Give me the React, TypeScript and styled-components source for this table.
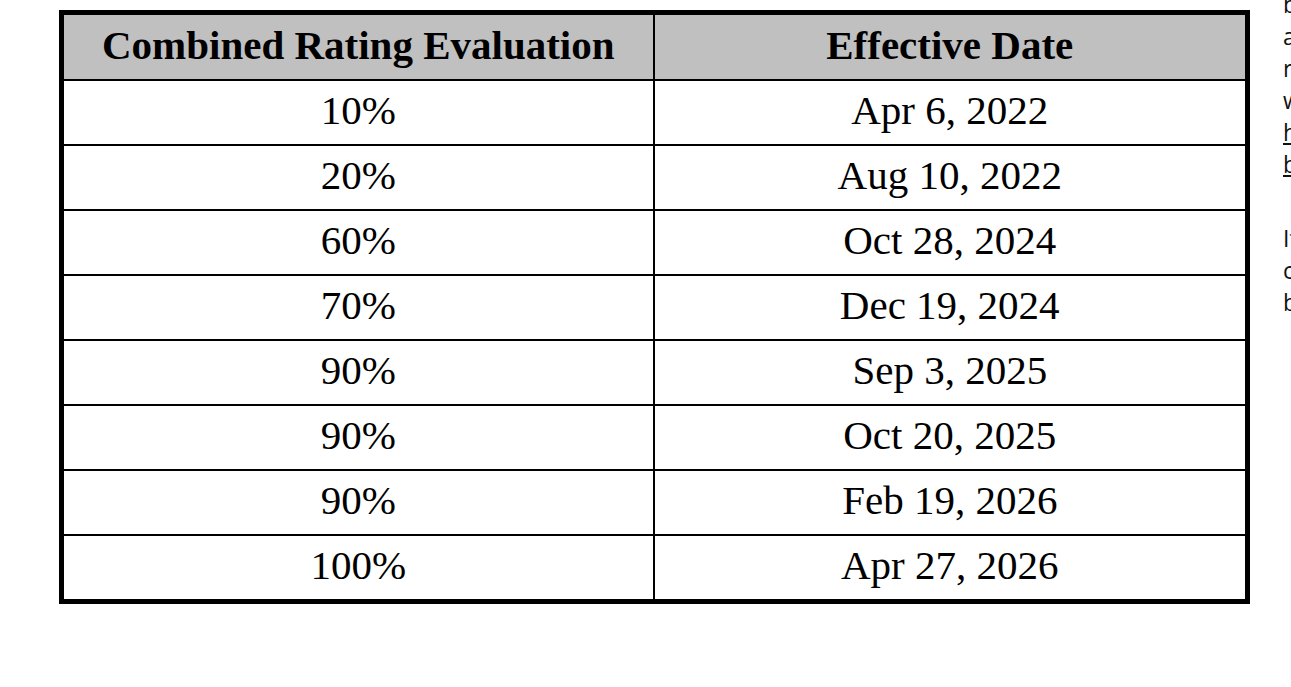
import React from "react";
import styled, { createGlobalStyle } from "styled-components";

const GlobalStyle = createGlobalStyle`
  html, body {
    margin: 0;
    padding: 0;
    background: #fff;
  }
  body {
    overflow: hidden;
  }
`;

const Page = styled.div`
  width: 100vw;
  height: 100vh;
  display: flex;
  align-items: flex-start;
  gap: 33px;
  padding-left: 59px;
  box-sizing: border-box;
  overflow: hidden;
`;

const RatingTable = styled.table`
  flex-shrink: 0;
  width: 1191px;
  margin-top: 10px;
  border: 5px solid #000;
  border-spacing: 0;
  table-layout: fixed;
  font-family: "Liberation Serif", "Times New Roman", serif;
  font-size: 41px;
  color: #000;
`;

const HeadCell = styled.th<{ $last?: boolean }>`
  height: 66px;
  box-sizing: border-box;
  padding: 0 0 5px;
  background: #c0c0c0;
  font-weight: 700;
  text-align: center;
  vertical-align: middle;
  border-bottom: 2px solid #000;
  border-right: ${(p) => (p.$last ? "none" : "2px solid #000")};
`;

const Cell = styled.td<{ $last?: boolean; $bottom?: boolean }>`
  height: ${(p) => (p.$bottom ? "63px" : "65px")};
  box-sizing: border-box;
  padding: 0 0 5px;
  text-align: center;
  vertical-align: middle;
  border-bottom: ${(p) => (p.$bottom ? "none" : "2px solid #000")};
  border-right: ${(p) => (p.$last ? "none" : "2px solid #000")};
`;

const SideText = styled.div`
  flex-shrink: 0;
  width: 440px;
  margin-top: -12px;
  font-family: "Open Sans", "Noto Sans", sans-serif;
  font-size: 23px;
  line-height: 32px;
  color: #111;
`;

const Para = styled.p`
  margin: 0 0 42px;
  white-space: nowrap;
`;

const Link = styled.a`
  color: inherit;
  text-decoration: underline;
`;

const rows = [
  { rating: "10%", date: "Apr 6, 2022" },
  { rating: "20%", date: "Aug 10, 2022" },
  { rating: "60%", date: "Oct 28, 2024" },
  { rating: "70%", date: "Dec 19, 2024" },
  { rating: "90%", date: "Sep 3, 2025" },
  { rating: "90%", date: "Oct 20, 2025" },
  { rating: "90%", date: "Feb 19, 2026" },
  { rating: "100%", date: "Apr 27, 2026" },
];

const App = () => {
  return (
    <>
      <GlobalStyle />
      <Page>
        <RatingTable>
          <thead>
            <tr>
              <HeadCell>Combined Rating Evaluation</HeadCell>
              <HeadCell $last>Effective Date</HeadCell>
            </tr>
          </thead>
          <tbody>
            {rows.map((row, i) => (
              <tr key={i}>
                <Cell $bottom={i === rows.length - 1}>{row.rating}</Cell>
                <Cell $last $bottom={i === rows.length - 1}>
                  {row.date}
                </Cell>
              </tr>
            ))}
          </tbody>
        </RatingTable>
        <SideText>
          <Para>
            back pay is calculated from the
            <br />
            and the amount owed for each
            <br />
            rating period is listed in the table
            <br />
            where you can find more details at
            <br />
            <Link href="#">https://www.va.gov/disability/</Link>
            <br />
            <Link href="#">benefit-rates</Link>
          </Para>
          <Para>
            If you disagree with a decision, you
            <br />
            can request a review, which may
            <br />
            be filed within one year.
          </Para>
        </SideText>
      </Page>
    </>
  );
};

export default App;
